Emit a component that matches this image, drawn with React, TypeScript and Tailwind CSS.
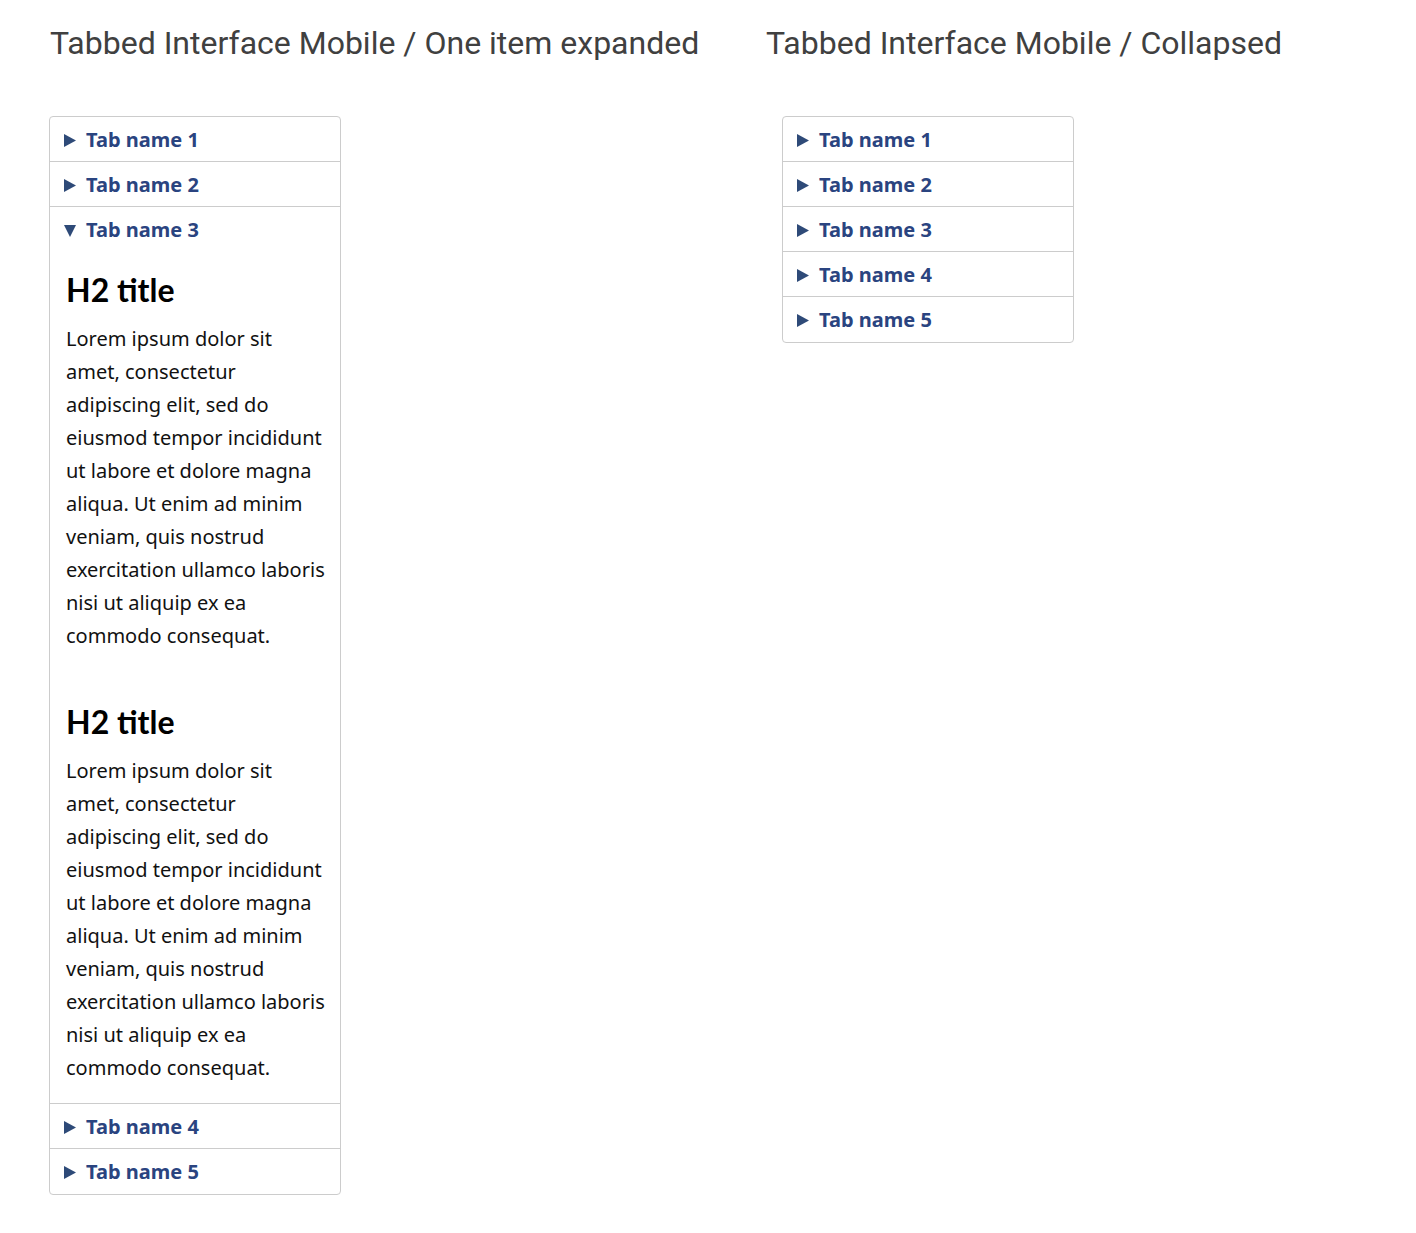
import React from 'react'

const TABS = ['Tab name 1', 'Tab name 2', 'Tab name 3', 'Tab name 4', 'Tab name 5']

const LOREM =
  'Lorem ipsum dolor sit amet, consectetur adipiscing elit, sed do eiusmod tempor incididunt ut labore et dolore magna aliqua. Ut enim ad minim veniam, quis nostrud exercitation ullamco laboris nisi ut aliquip ex ea commodo consequat.'

function Arrow({ open }: { open: boolean }) {
  return (
    <svg width="12" height="13" viewBox="0 0 12 13" className="shrink-0">
      {open ? (
        <polygon points="0,1 12,1 6,13" fill="#2e4a78" />
      ) : (
        <polygon points="0,0 12,6.5 0,13" fill="#2e4a78" />
      )}
    </svg>
  )
}

function TabHeader({ label, open }: { label: string; open: boolean }) {
  return (
    <div className="flex h-[44px] items-center gap-[10px] px-[14px] pt-[2px]">
      <Arrow open={open} />
      <span className="text-[20px] font-bold text-[#2a4480] [font-family:'Noto_Sans',sans-serif]">
        {label}
      </span>
    </div>
  )
}

function Section({ first }: { first?: boolean }) {
  return (
    <div className={first ? 'mt-[19px]' : 'mt-[50px]'}>
      <h2 className="text-[32px] leading-[40px] font-bold text-black [font-family:Lato,sans-serif]">
        H2 title
      </h2>
      <p className="mt-[12px] text-[20px] leading-[33px] text-[#111] [font-family:'Noto_Sans',sans-serif]">
        {LOREM}
      </p>
    </div>
  )
}

function Accordion({ openIndex }: { openIndex: number | null }) {
  return (
    <div className="w-[292px] overflow-hidden rounded-[4px] border border-[#cccccc] bg-white pb-px">
      {TABS.map((t, i) => (
        <div key={t} className={i > 0 ? 'border-t border-[#cccccc]' : ''}>
          <TabHeader label={t} open={openIndex === i} />
          {openIndex === i && (
            <div className="pl-4 pr-3 pb-[19px]">
              <Section first />
              <Section />
            </div>
          )}
        </div>
      ))}
    </div>
  )
}

export default function App() {
  return (
    <div className="min-h-screen bg-white pt-[25px]">
      <div className="flex">
        <div className="ml-[49px] w-[717px]">
          <h1 className="ml-px text-[32px] leading-[36px] text-[#404040] [font-family:Roboto,sans-serif]">
            Tabbed Interface Mobile / One item expanded
          </h1>
          <div className="mt-[55px]">
            <Accordion openIndex={2} />
          </div>
        </div>
        <div>
          <h1 className="text-[32px] leading-[36px] text-[#404040] [font-family:Roboto,sans-serif]">
            Tabbed Interface Mobile / Collapsed
          </h1>
          <div className="ml-4 mt-[55px]">
            <Accordion openIndex={null} />
          </div>
        </div>
      </div>
    </div>
  )
}
